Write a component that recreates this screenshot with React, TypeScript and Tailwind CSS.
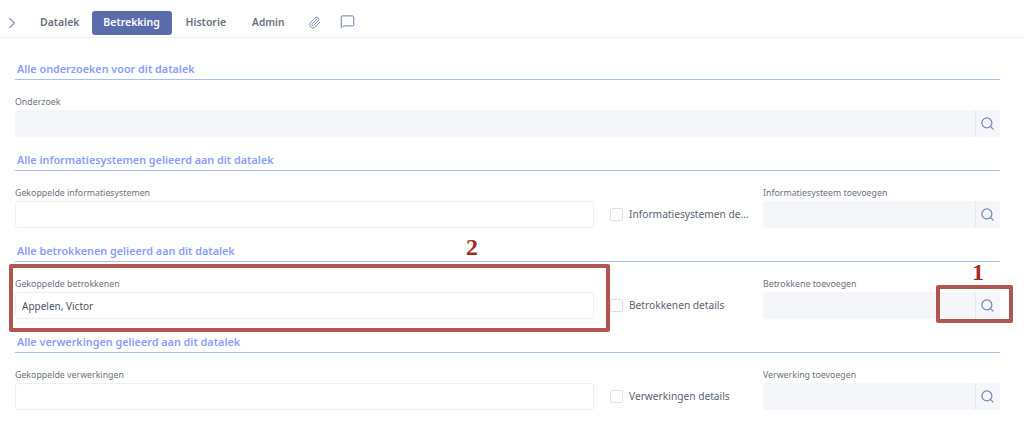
import { ChevronRight, MessageSquare, Paperclip, Search } from "lucide-react";

type AddFieldProps = {
  label: string;
  className?: string;
};

function AddField({ label, className = "w-[237px]" }: AddFieldProps) {
  return (
    <div className={`${className} shrink-0`}>
      <div className="h-[18px] text-[8.8px] leading-[20px] text-[#6b7280]">{label}</div>
      <div className="flex h-[27px] rounded-[3px] bg-[#f5f6fa]">
        <div className="flex-1" />
        <div className="flex w-[25px] items-center justify-center border-l border-[#e8eaf2] pr-[1px]">
          <Search size={15} strokeWidth={2} className="text-[#7485ba]" />
        </div>
      </div>
    </div>
  );
}

type LinkedFieldProps = {
  label: string;
  value?: string;
};

function LinkedField({ label, value }: LinkedFieldProps) {
  return (
    <div className="w-[579px] shrink-0">
      <div className="h-[18px] text-[8.8px] leading-[20px] text-[#6b7280]">{label}</div>
      <div className="h-[27px] rounded-[3px] border border-[#eff0f5] bg-white pl-[6px] text-[10px] leading-[26px] text-[#4b5563]">
        {value}
      </div>
    </div>
  );
}

type SectionProps = {
  title: string;
  linked: string;
  value?: string;
  details: string;
  add: string;
};

function SectionTitle({ title }: { title: string }) {
  return (
    <div className="h-[20px] border-b border-[#aabdf6] pl-[2px] text-[10.8px] font-semibold leading-[18px] text-[#8a9dfa]">
      {title}
    </div>
  );
}

function Section({ title, linked, value, details, add }: SectionProps) {
  return (
    <section className="h-[91px]">
      <SectionTitle title={title} />
      <div className="flex pt-[12px]">
        <LinkedField label={linked} value={value} />
        <div className="flex w-[169px] shrink-0 items-center pl-[16px] pt-[18px]">
          <div className="h-[13px] w-[13px] shrink-0 rounded-[2px] border border-[#dfe1e8] bg-white" />
          <span className="ml-[6px] text-[10.2px] text-[#5a5f73]">{details}</span>
        </div>
        <AddField label={add} />
      </div>
    </section>
  );
}

export default function App() {
  return (
    <div className="relative h-[435px] w-[1024px] overflow-hidden bg-white font-['Noto_Sans',sans-serif]">
      <nav className="flex h-[38px] items-center border-b border-[#eef0f5] pt-[8px]">
        <ChevronRight size={18} strokeWidth={1.6} className="ml-[3px] text-[#8593c0]" />
        <span className="ml-[19px] text-[10.5px] font-semibold text-[#6b6f7c]">Datalek</span>
        <span className="ml-[12px] flex h-[24px] w-[80px] items-center justify-center rounded-[3px] bg-[#5b6cac] text-[10.5px] font-semibold text-white">
          Betrekking
        </span>
        <span className="ml-[14px] text-[10.5px] font-semibold text-[#6b6f7c]">Historie</span>
        <span className="ml-[26px] text-[10.2px] font-semibold text-[#6b6f7c]">Admin</span>
        <Paperclip size={13} strokeWidth={1.6} className="ml-[24px] text-[#7485ba]" />
        <MessageSquare size={15} strokeWidth={1.5} className="ml-[19px] -mt-[2px] text-[#6474a8]" />
      </nav>

      <main className="ml-[15px] mr-[24px] pt-[22px]">
        <section className="h-[91px]">
          <SectionTitle title="Alle onderzoeken voor dit datalek" />
          <div className="pt-[12px]">
            <AddField label="Onderzoek" className="w-[985px]" />
          </div>
        </section>
        <Section
          title="Alle informatiesystemen gelieerd aan dit datalek"
          linked="Gekoppelde informatiesystemen"
          details="Informatiesystemen de..."
          add="Informatiesysteem toevoegen"
        />
        <Section
          title="Alle betrokkenen gelieerd aan dit datalek"
          linked="Gekoppelde betrokkenen"
          value="Appelen, Victor"
          details="Betrokkenen details"
          add="Betrokkene toevoegen"
        />
        <Section
          title="Alle verwerkingen gelieerd aan dit datalek"
          linked="Gekoppelde verwerkingen"
          details="Verwerkingen details"
          add="Verwerking toevoegen"
        />
      </main>

      {/* annotations on top of the screenshot */}
      <div className="absolute left-[9px] top-[264px] h-[68px] w-[601px] rounded-[2px] border-[4px] border-[#b05650]" />
      <div className="absolute left-[936px] top-[285px] h-[38px] w-[77px] rounded-[2px] border-[4px] border-[#b05650]" />
      <span className="absolute left-[466px] top-[233px] font-['Liberation_Serif',serif] text-[24px] font-bold leading-[28px] text-[#a52a22]">
        2
      </span>
      <span className="absolute left-[972px] top-[260px] font-['Liberation_Serif',serif] text-[24px] font-bold leading-[24px] text-[#a52a22]">
        1
      </span>
    </div>
  );
}
